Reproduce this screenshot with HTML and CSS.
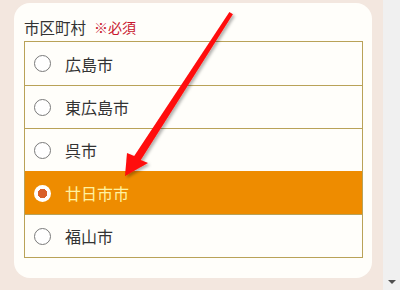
FILE: index.html
```html
<!DOCTYPE html>
<html lang="ja">
<head>
<meta charset="utf-8">
<link rel="stylesheet" href="styles.css">
</head>
<body>
<div class="page">
  <main class="main">
    <section class="card">
      <div class="label">市区町村<span class="req">※必須</span></div>
      <ul class="list">
        <li class="row"><span class="radio"></span><span class="name">広島市</span></li>
        <li class="row"><span class="radio"></span><span class="name">東広島市</span></li>
        <li class="row"><span class="radio"></span><span class="name">呉市</span></li>
        <li class="row selected"><span class="radio"></span><span class="name">廿日市市</span></li>
        <li class="row"><span class="radio"></span><span class="name">福山市</span></li>
      </ul>
    </section>
  </main>
  <div class="scrollbar"><span class="down"></span></div>
</div>
<svg class="arrow" width="400" height="290" viewBox="0 0 400 290">
  <defs>
    <filter id="sh" x="-20%" y="-20%" width="140%" height="140%">
      <feDropShadow dx="2" dy="2" stdDeviation="1.5" flood-color="#000" flood-opacity="0.3"/>
    </filter>
  </defs>
  <polygon filter="url(#sh)" fill="#ff0a0a" points="229.4,12 232.9,14.2 140.8,160.1 148,163 125,176 127,153 134.2,155.9"/>
</svg>
</body>
</html>
```
FILE: styles.css
```css
html, body {
  margin: 0;
  padding: 0;
}
body {
  width: 400px;
  height: 290px;
  overflow: hidden;
  font-family: "Noto Sans CJK JP", "Noto Sans", sans-serif;
  background: #f3e7df;
  position: relative;
}
.page {
  display: flex;
  height: 290px;
}
.main {
  width: 383px;
  padding: 3px 0 0 14px;
  box-sizing: border-box;
}
.card {
  width: 358px;
  height: 275px;
  background: #fffefa;
  border-radius: 16px;
  box-sizing: border-box;
  padding: 10px 0 0 10px;
}
.label {
  font-size: 15.5px;
  color: #333;
  height: 28px;
  display: flex;
  align-items: center;
}
.req {
  color: #c8162e;
  font-size: 14px;
  margin-left: 8px;
}
.list {
  list-style: none;
  margin: 0;
  padding: 0;
  width: 339px;
  border: 1px solid #b9a258;
  box-sizing: border-box;
}
.row {
  height: 43px;
  display: flex;
  align-items: center;
  padding-left: 9px;
  border-top: 1px solid #b9a258;
  box-sizing: border-box;
}
.row:first-child {
  border-top: none;
}
.radio {
  width: 17px;
  height: 17px;
  border: 1.3px solid #7a7a7a;
  border-radius: 50%;
  box-sizing: border-box;
  background: #fff;
  flex: none;
}
.name {
  margin-left: 14px;
  font-size: 16px;
  color: #333;
}
.row.selected {
  background: #ee8c00;
  border-top-color: #ee8c00;
}
.selected .radio {
  border: none;
  background: radial-gradient(circle, #d9602a 0 4.5px, #fff 5px);
}
.selected .name {
  color: #fff2a0;
}
.scrollbar {
  width: 17px;
  background: #f0f0f0;
  position: relative;
}
.down {
  position: absolute;
  left: 5px;
  bottom: 6px;
  width: 0;
  height: 0;
  border-left: 4px solid transparent;
  border-right: 4px solid transparent;
  border-top: 4px solid #505050;
}
.arrow {
  position: absolute;
  left: 0;
  top: 0;
  pointer-events: none;
}
```
